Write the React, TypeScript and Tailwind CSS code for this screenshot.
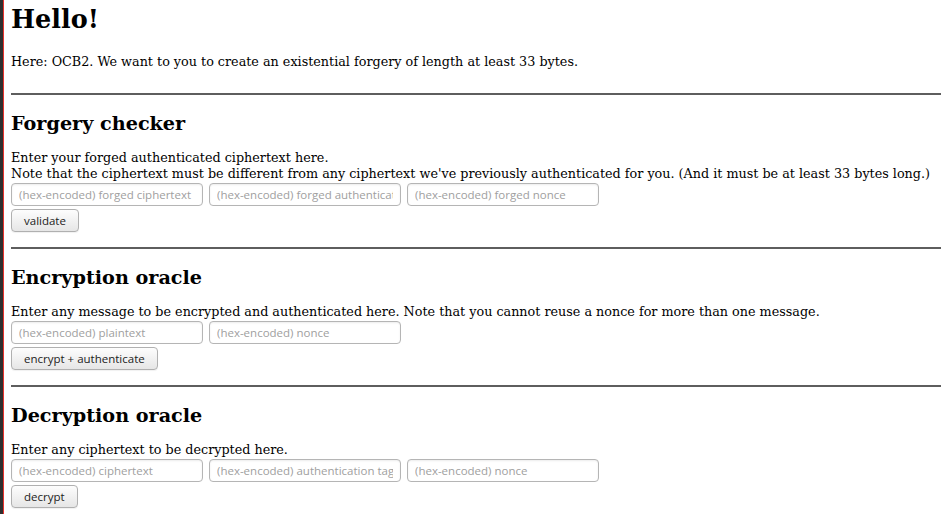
const serif = "font-['DejaVu_Serif',serif]";

function Field({ placeholder }: { placeholder: string }) {
  return (
    <input
      type="text"
      placeholder={placeholder}
      className="h-[23px] w-[192px] rounded-[4px] border border-[#b5b5b5] bg-white px-[7px] font-['Open_Sans',sans-serif] text-[11.5px] text-[#333] shadow-[inset_0_1px_2px_rgba(0,0,0,0.08)] outline-none placeholder:text-[#a0a0a0]"
    />
  );
}

function Button({ label }: { label: string }) {
  return (
    <button
      type="button"
      className="h-[23px] rounded-[4px] border border-[#b0b0b0] bg-gradient-to-b from-[#fdfdfd] to-[#e6e6e6] px-[12px] font-['Open_Sans',sans-serif] text-[11.5px] text-[#222] shadow-[0_1px_1px_rgba(0,0,0,0.06)]"
    >
      {label}
    </button>
  );
}

function Rule() {
  return <div className="h-[2px] bg-[#5e5e5e]" />;
}

interface SectionProps {
  title: string;
  lines: string[];
  fields: string[];
  action: string;
}

function Section({ title, lines, fields, action }: SectionProps) {
  return (
    <section className="pb-[15px]">
      <h2 className="mt-[17px] text-[19.2px] font-bold leading-[24px]">{title}</h2>
      <div className="mt-[14px] text-[12.75px] leading-[16px]">
        {lines.map((line) => (
          <p key={line}>{line}</p>
        ))}
      </div>
      <div className="mt-[1px] flex gap-[6px]">
        {fields.map((f) => (
          <Field key={f} placeholder={f} />
        ))}
      </div>
      <div className="mt-[2px]">
        <Button label={action} />
      </div>
    </section>
  );
}

export default function App() {
  return (
    <div className={`flex min-h-[514px] bg-white text-black ${serif}`}>
      {/* window edge */}
      <div className="w-[3px] shrink-0 bg-[#2e2e2e]" />
      <div className="w-[1px] shrink-0 bg-[#e8322c]" />

      <main className="min-w-0 flex-1 pl-[7px]">
        <h1 className="mt-[3px] text-[25.5px] font-bold leading-[32px]">Hello!</h1>
        <p className="mt-[19px] text-[12.75px] leading-[16px]">
          Here: OCB2. We want to you to create an existential forgery of length at least 33 bytes.
        </p>
        <div className="mt-[23px]">
          <Rule />
        </div>

        <Section
          title="Forgery checker"
          lines={[
            "Enter your forged authenticated ciphertext here.",
            "Note that the ciphertext must be different from any ciphertext we've previously authenticated for you. (And it must be at least 33 bytes long.)",
          ]}
          fields={[
            "(hex-encoded) forged ciphertext",
            "(hex-encoded) forged authentication tag",
            "(hex-encoded) forged nonce",
          ]}
          action="validate"
        />
        <Rule />

        <Section
          title="Encryption oracle"
          lines={[
            "Enter any message to be encrypted and authenticated here. Note that you cannot reuse a nonce for more than one message.",
          ]}
          fields={["(hex-encoded) plaintext", "(hex-encoded) nonce"]}
          action="encrypt + authenticate"
        />
        <Rule />

        <Section
          title="Decryption oracle"
          lines={["Enter any ciphertext to be decrypted here."]}
          fields={[
            "(hex-encoded) ciphertext",
            "(hex-encoded) authentication tag",
            "(hex-encoded) nonce",
          ]}
          action="decrypt"
        />
      </main>
    </div>
  );
}
